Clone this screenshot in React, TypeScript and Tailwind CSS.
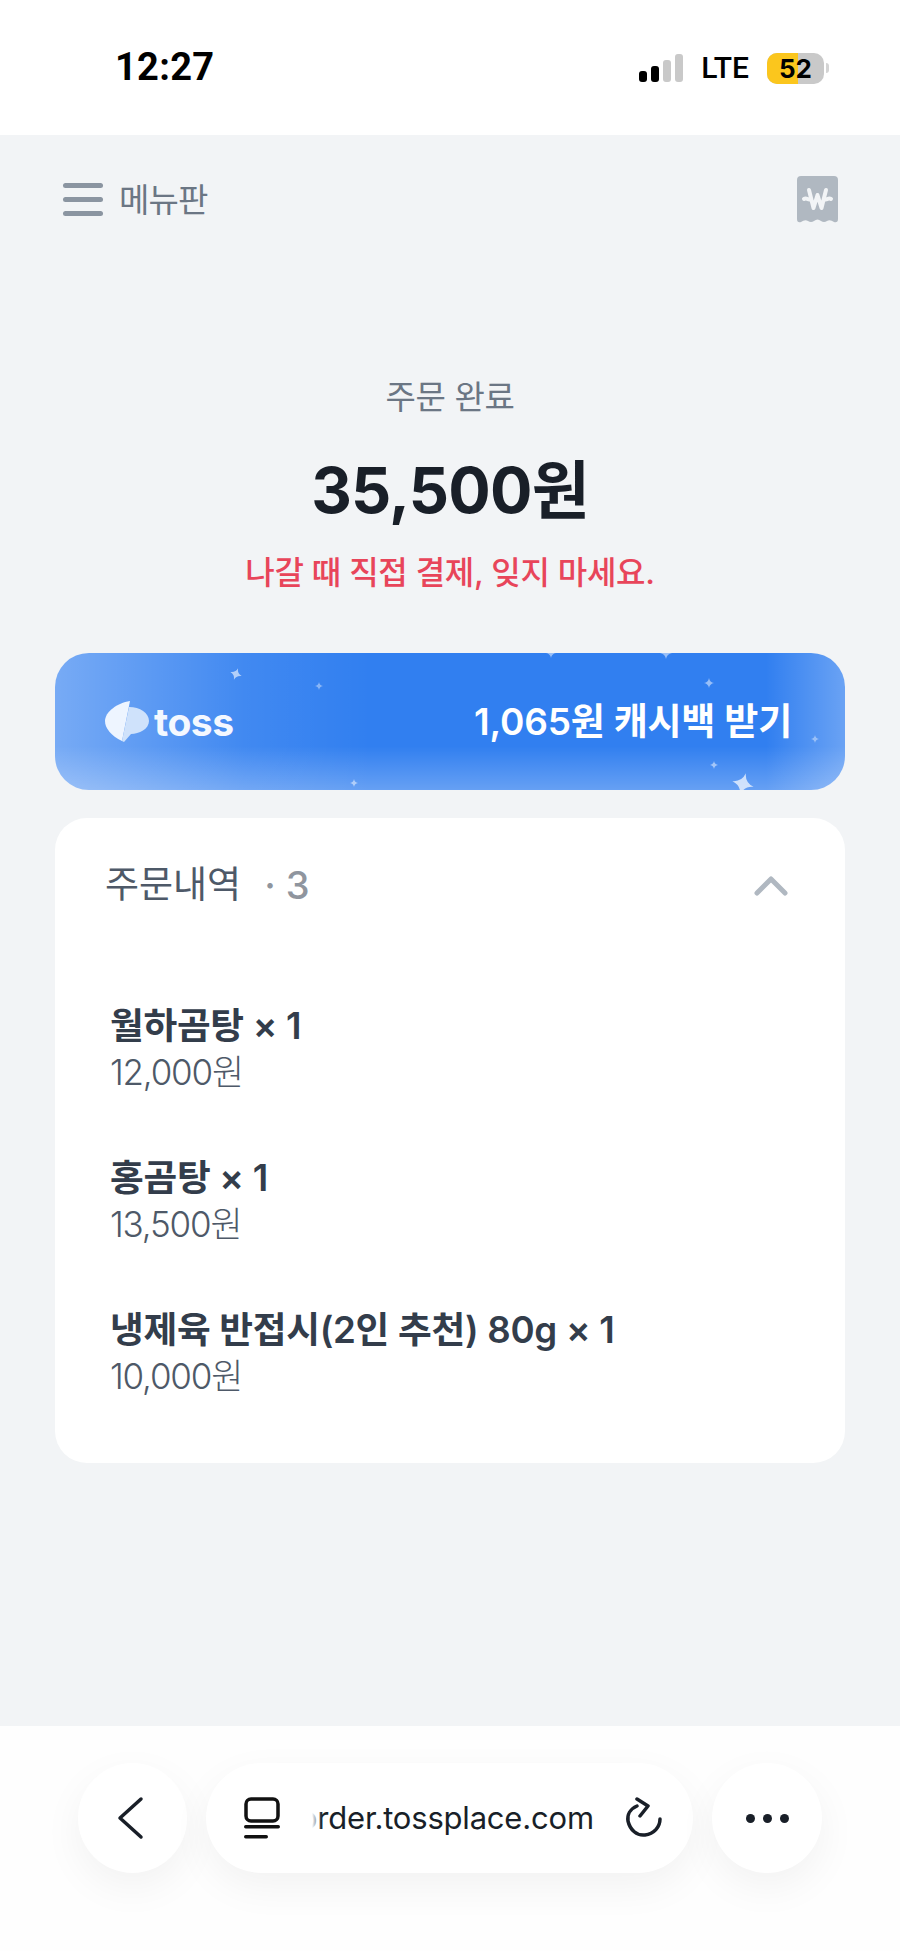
const kr = "font-['Inter','Noto_Sans_CJK_KR',sans-serif]";

function Star({ x, y, s, o = 0.6, r = 0 }: { x: number; y: number; s: number; o?: number; r?: number }) {
  return (
    <path
      transform={`translate(${x} ${y}) rotate(${r}) scale(${s})`}
      d="M0 -1 Q0.15 -0.15 1 0 Q0.15 0.15 0 1 Q-0.15 0.15 -1 0 Q-0.15 -0.15 0 -1Z"
      fill="#ffffff"
      opacity={o}
    />
  );
}

function Item({ name, price }: { name: string; price: string }) {
  return (
    <div className="flex flex-col">
      <div className="text-[36.700px] leading-[46px] font-semibold text-[#333d4b] tracking-[-0.3px]">{name}</div>
      <div className="text-[35px] leading-[46px] font-light text-[#4e5968] tracking-[-1.200px]">{price}</div>
    </div>
  );
}

export default function App() {
  return (
    <div className={`${kr} w-[900px] h-[1951px] overflow-hidden flex flex-col bg-[#f2f4f6]`}>
      {/* status bar */}
      <div className="h-[135px] bg-white flex items-start justify-between pl-[115px] pr-[71px] pt-[44px] shrink-0">
        <div className="font-['Roboto',sans-serif] text-[38px] leading-[46px] font-bold text-black tracking-[0.3px]">12:27</div>
        <div className="flex items-center h-[46px] pt-[2px]">
          <div className="flex items-end gap-[4px] h-[28px]">
            <div className="w-[8px] h-[11px] rounded-[3px] bg-black" />
            <div className="w-[8px] h-[16px] rounded-[3px] bg-black" />
            <div className="w-[8px] h-[22px] rounded-[3px] bg-[#c9c9c9]" />
            <div className="w-[8px] h-[28px] rounded-[3px] bg-[#c9c9c9]" />
          </div>
          <div className="ml-[18px] font-['Roboto',sans-serif] text-[30px] leading-[32px] font-medium text-black">LTE</div>
          <div className="ml-[18px] w-[57px] h-[31px] rounded-[10px] overflow-hidden relative bg-[#c9c9c9] flex items-center justify-center">
            <div className="absolute left-0 top-0 bottom-0 w-[31px] bg-[#fbc61d]" />
            <span className="relative text-[26px] leading-[31px] font-bold text-black">52</span>
          </div>
          <div className="ml-[2px] w-[3px] h-[10px] rounded-r-[3px] bg-[#d4d4d4]" />
        </div>
      </div>

      {/* main */}
      <div className="flex-1 flex flex-col min-h-0">
        {/* header */}
        <div className="flex items-center justify-between pl-[63px] pr-[62px] pt-[41px] h-[122px] shrink-0 pb-[34px]">
          <div className="flex items-center">
            <div className="flex flex-col gap-[9px] w-[40px]">
              <div className="h-[5px] rounded-full bg-[#8b95a1]" />
              <div className="h-[5px] rounded-full bg-[#8b95a1]" />
              <div className="h-[5px] rounded-full bg-[#8b95a1]" />
            </div>
            <div className="ml-[16px] text-[33px] leading-[40px] text-[#6b7684] font-normal tracking-[-0.8px]">메뉴판</div>
          </div>
          <svg width="41" height="47" viewBox="0 0 41 47">
            <path d="M4 0H37a4 4 0 0 1 4 4V43Q41 47 37 46Q33 43 30 45Q27 47 24 45Q20.500 42 17 45Q14 47 11 45Q8 43 4 46Q0 47 0 43V4a4 4 0 0 1 4-4Z" fill="#b0b8c1" />
            <path d="M12 14L16.500 32L20.500 19L24.500 32L29 14M7 23C10 21 11 25 14 23M27 23C30 25 31 21 34 23" stroke="#f2f4f6" strokeWidth="4" fill="none" strokeLinecap="round" strokeLinejoin="round" />
          </svg>
        </div>

        {/* summary */}
        <div className="flex flex-col items-center pt-[117px] shrink-0">
          <div className="text-[33px] leading-[46px] text-[#6b7684] font-normal tracking-[-0.3px]">주문 완료</div>
          <div className="mt-[32px] text-[63px] leading-[76px] font-bold text-[#191f28] tracking-[-0.800px]">35,500원</div>
          <div className="mt-[23px] text-[32px] leading-[44px] font-medium text-[#e8455a] tracking-[-0.300px]">나갈 때 직접 결제, 잊지 마세요.</div>
        </div>

        {/* cashback banner */}
        <div className="relative mx-[55px] mt-[58px] h-[137px] rounded-[34px] overflow-hidden bg-[#317ff0] bg-[linear-gradient(to_right,rgba(255,255,255,0.34),rgba(255,255,255,0.08)_24%,rgba(255,255,255,0)_40%,rgba(255,255,255,0)_90%,rgba(255,255,255,0.28)),linear-gradient(to_top,rgba(255,255,255,0.26),rgba(255,255,255,0)_32%)] flex items-center justify-between pl-[50px] pr-[53px] shrink-0">
          <svg className="absolute inset-0" width="790" height="137" viewBox="0 0 790 137">
            <Star x={181} y={21} s={6} r={20} />
            <Star x={264} y={33} s={4} o={0.4} />
            <Star x={496} y={0} s={5} o={0.5} />
            <Star x={611} y={0} s={6} o={0.5} />
            <Star x={654} y={30} s={5} o={0.5} />
            <Star x={760} y={86} s={4} o={0.4} />
            <Star x={659} y={112} s={4} o={0.5} />
            <Star x={299} y={130} s={4} o={0.5} />
            <Star x={688} y={131} s={11} o={0.7} r={15} />
          </svg>
          <div className="relative flex items-center">
            <svg width="44" height="41" viewBox="0 0 44 41">
              <path d="M25 0L17 40C6 35 0 27 0 20C0 11 12 2 25 0Z" fill="#eef5ff" />
              <path d="M24 6C35 6 44 12 44 20C44 28 34 33 26 33L19 41L17 40Z" fill="#cfe2fb" />
            </svg>
            <span className="ml-[5px] text-[39px] leading-[44px] font-bold text-[#f4f8ff] tracking-[-0.5px]">toss</span>
          </div>
          <div className="relative text-[37px] leading-[46px] font-semibold text-white tracking-[-0.2px]">1,065원 캐시백 받기</div>
        </div>

        {/* order card */}
        <div className="mx-[55px] mt-[28px] h-[645px] rounded-[32px] bg-white pl-[50px] pr-[55px] pt-[42px] flex flex-col shrink-0">
          <div className="flex items-center justify-between h-[50px]">
            <div className="flex items-center">
              <span className="text-[37px] leading-[50px] text-[#4e5968] font-normal">주문내역</span>
              <span className="ml-[23px] text-[38px] leading-[50px] text-[#8f959e] font-medium">· 3</span>
            </div>
            <svg width="36" height="22" viewBox="0 0 36 22" className="mr-[1px]">
              <path d="M4 19L18 5L32 19" stroke="#b0b8c1" strokeWidth="5" fill="none" strokeLinecap="round" strokeLinejoin="round" />
            </svg>
          </div>
          <div className="flex flex-col gap-[60px] mt-[93px] pl-[5px]">
            <Item name="월하곰탕 × 1" price="12,000원" />
            <Item name="홍곰탕 × 1" price="13,500원" />
            <Item name="냉제육 반접시(2인 추천) 80g × 1" price="10,000원" />
          </div>
        </div>

        <div className="flex-1" />

        {/* browser bar */}
        <div className="h-[225px] bg-[#fefefe] shrink-0 flex items-start pt-[37px] pl-[78px] pr-[78px] gap-[19px]">
          <div className="w-[109px] h-[110px] rounded-full bg-white shadow-[0_14px_40px_rgba(0,0,0,0.05)] flex items-center justify-center pr-[5px]">
            <svg width="30" height="44" viewBox="0 0 30 44">
              <path d="M26 3L5 22L26 41" stroke="#191f28" strokeWidth="3.500" fill="none" strokeLinecap="round" strokeLinejoin="round" />
            </svg>
          </div>
          <div className="w-[488px] h-[110px] rounded-full bg-white shadow-[0_14px_40px_rgba(0,0,0,0.05)] flex items-center pl-[38px]">
            <svg width="36" height="42" viewBox="0 0 36 42" className="shrink-0">
              <rect x="2" y="2" width="32" height="22" rx="5" stroke="#111" strokeWidth="3.500" fill="none" />
              <rect x="0" y="28" width="36" height="3.500" rx="1.700" fill="#111" />
              <rect x="0" y="38" width="24" height="3.500" rx="1.700" fill="#111" />
            </svg>
            <div className="relative ml-[32px] w-[282px] h-[44px] overflow-hidden shrink-0">
              <div className="absolute right-0 top-0 text-[31px] leading-[44px] text-[#191f28] whitespace-nowrap font-['Inter',sans-serif] tracking-[-0.2px]">order.tossplace.com</div>
              <div className="absolute left-0 top-0 bottom-0 w-[10px] bg-linear-to-r from-white to-transparent" />
            </div>
            <svg width="38" height="42" viewBox="0 0 38 42" className="ml-[31px] shrink-0">
              <path d="M12 9C5 12 2 18 3 24C5 33 12 39 20 38C29 37 35 30 35 22" stroke="#191f28" strokeWidth="3.500" fill="none" strokeLinecap="round" />
              <path d="M12 2L23 9L15 19" stroke="#191f28" strokeWidth="3.500" fill="none" strokeLinecap="round" strokeLinejoin="round" />
            </svg>
          </div>
          <div className="w-[110px] h-[110px] rounded-full bg-white shadow-[0_14px_40px_rgba(0,0,0,0.05)] flex items-center justify-center gap-[8px]">
            <div className="w-[9px] h-[9px] rounded-full bg-[#191f28]" />
            <div className="w-[9px] h-[9px] rounded-full bg-[#191f28]" />
            <div className="w-[9px] h-[9px] rounded-full bg-[#191f28]" />
          </div>
        </div>
      </div>
    </div>
  );
}
